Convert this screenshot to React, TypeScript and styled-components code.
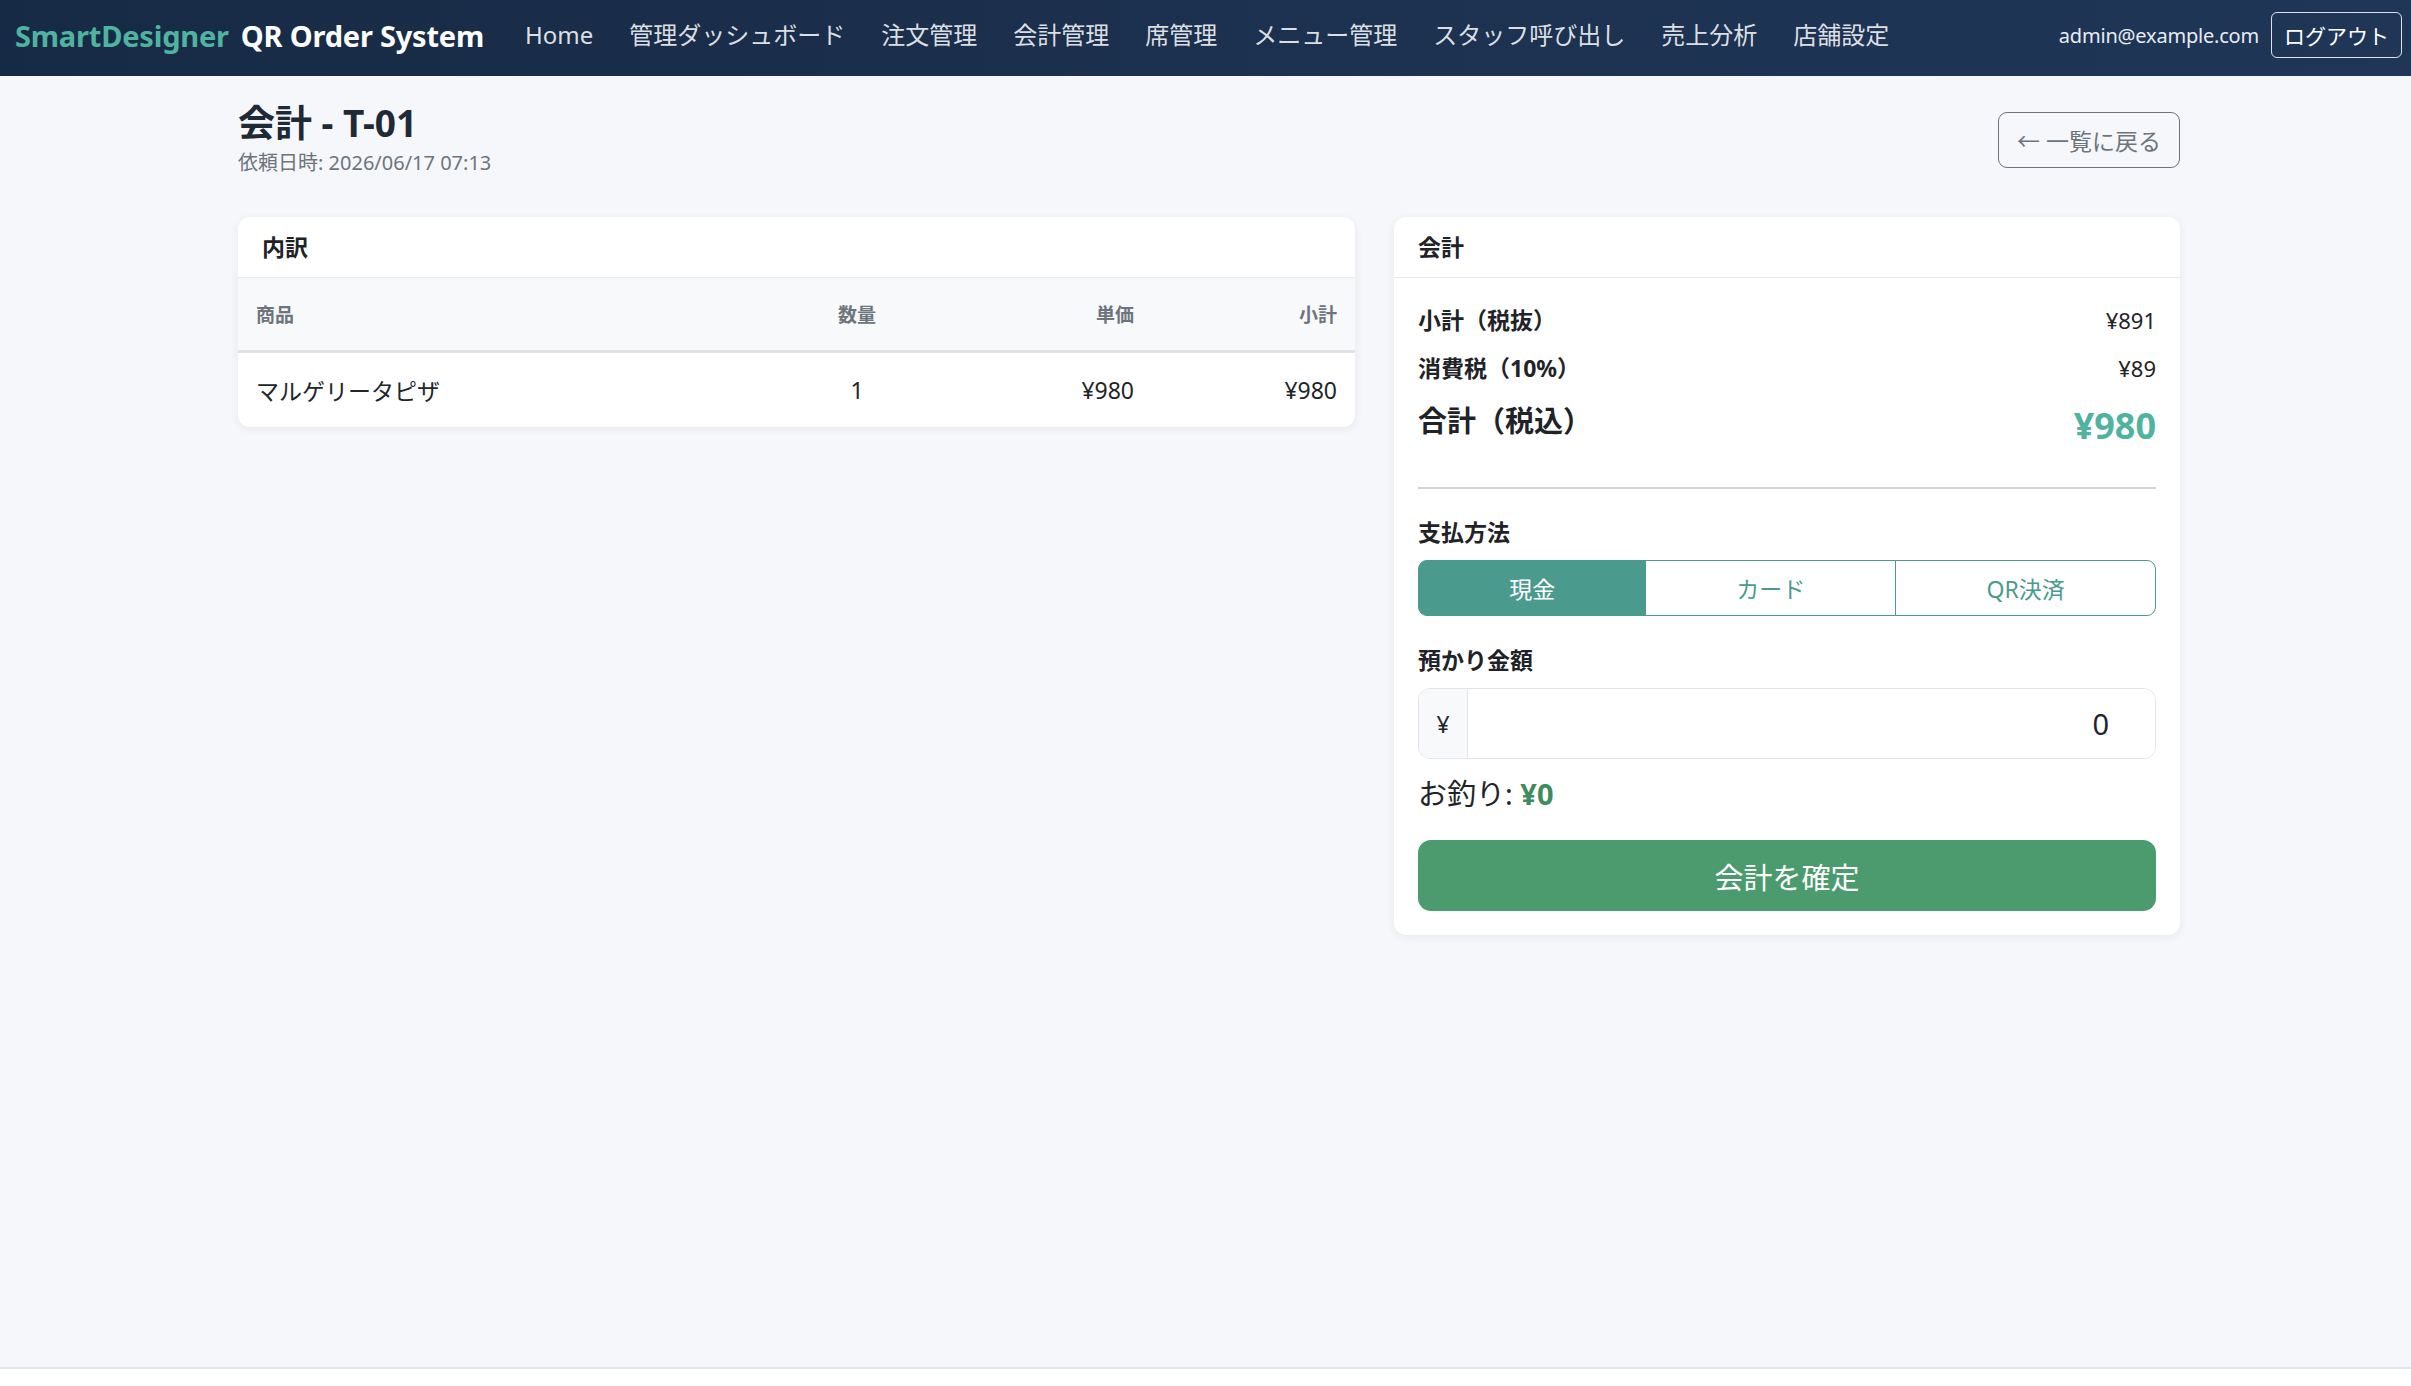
import React, { useState } from "react";
import styled, { createGlobalStyle } from "styled-components";

const GlobalStyle = createGlobalStyle`
  * { box-sizing: border-box; }
  body {
    margin: 0;
    background: #ffffff;
    font-family: "Noto Sans", "Noto Sans CJK JP", sans-serif;
    color: #212529;
  }
  input[type="number"]::-webkit-inner-spin-button,
  input[type="number"]::-webkit-outer-spin-button {
    -webkit-appearance: none;
    margin: 0;
  }
`;

/* ---------- navbar ---------- */

const Navbar = styled.nav`
  height: 76px;
  display: flex;
  align-items: center;
  padding: 0 9px 6px 15px;
  background: linear-gradient(90deg, #172a45 0%, #1d3251 60%, #1f3657 100%);
`;

const Brand = styled.div`
  font-size: 29px;
  font-weight: 700;
  color: #ffffff;
  white-space: nowrap;
  margin-right: 23px;
  letter-spacing: -0.2px;
`;

const BrandAccent = styled.span`
  color: #4fb3a0;
  margin-right: 12px;
`;

const NavLinks = styled.div`
  display: flex;
  align-items: center;
  flex: 1;
`;

const NavLink = styled.a`
  font-size: 24px;
  color: rgba(255, 255, 255, 0.86);
  padding: 0 18px;
  text-decoration: none;
  white-space: nowrap;
  line-height: 36px;
`;

const UserArea = styled.div`
  display: flex;
  align-items: center;
  gap: 12px;
`;

const UserEmail = styled.span`
  font-size: 20px;
  letter-spacing: -0.2px;
  color: #e8ecf1;
`;

const LogoutButton = styled.button`
  height: 46px;
  padding: 0 12px;
  font-family: inherit;
  font-size: 21px;
  color: #ffffff;
  background: transparent;
  border: 1.5px solid rgba(255, 255, 255, 0.85);
  border-radius: 6px;
`;

/* ---------- page ---------- */

const Main = styled.main`
  min-height: 1291px;
  background: #f6f7fb;
  padding: 25px 231px 0 238px;
`;

const PageHeader = styled.div`
  display: flex;
  justify-content: space-between;
  align-items: center;
  margin-bottom: 39px;
`;

const Title = styled.h1`
  margin: 0;
  font-size: 37px;
  line-height: 43px;
  font-weight: 700;
  color: #1f2a37;
`;

const Subtitle = styled.div`
  margin-top: 3px;
  font-size: 20px;
  line-height: 31px;
  color: #6c757d;
`;

const OutlineButton = styled.button`
  height: 56px;
  padding: 0 18px;
  font-family: inherit;
  font-size: 23px;
  color: #6c757d;
  background: transparent;
  border: 1.5px solid #6c757d;
  border-radius: 9px;
`;

const Columns = styled.div`
  display: grid;
  grid-template-columns: minmax(0, 1fr) 786px;
  gap: 39px;
  align-items: start;
`;

const Card = styled.section`
  background: #ffffff;
  border-radius: 12px;
  box-shadow: 0 2px 10px rgba(30, 41, 59, 0.07);
  overflow: hidden;
`;

const CardHeader = styled.div`
  padding: 12px 24px;
  font-size: 23px;
  line-height: 36px;
  font-weight: 700;
  color: #1f2328;
  border-bottom: 1.5px solid #e5e8ec;
`;

const CardBody = styled.div`
  padding: 24px 24px 24px;
`;

/* ---------- items table ---------- */

const Table = styled.table`
  width: 100%;
  border-collapse: collapse;
  table-layout: fixed;
`;

const Th = styled.th<{ $align?: "left" | "center" | "right"; $width?: number }>`
  height: 73px;
  padding: 0 18px;
  background: #f8f9fa;
  border-bottom: 3px solid #dee2e6;
  font-size: 19px;
  font-weight: 700;
  color: #6c757d;
  text-align: ${(p) => p.$align ?? "left"};
  width: ${(p) => (p.$width ? `${p.$width}px` : "auto")};
`;

const Td = styled.td<{ $align?: "left" | "center" | "right" }>`
  height: 76px;
  padding: 0 18px;
  font-size: 23px;
  color: #212529;
  text-align: ${(p) => p.$align ?? "left"};
`;

/* ---------- checkout panel ---------- */

const SummaryRow = styled.div`
  display: flex;
  justify-content: space-between;
  align-items: center;
  font-size: 23px;
  line-height: 36px;
  margin-bottom: 12px;
`;

const SummaryLabel = styled.span`
  font-weight: 700;
  color: #1f2328;
`;

const SummaryValue = styled.span`
  font-size: 22px;
  color: #212529;
`;

const TotalRow = styled.div`
  display: flex;
  justify-content: space-between;
  align-items: flex-start;
`;

const TotalLabel = styled.span`
  font-size: 29px;
  line-height: 45px;
  font-weight: 700;
  color: #1f2328;
`;

const TotalValue = styled.span`
  margin-top: 5px;
  font-size: 36px;
  line-height: 45px;
  font-weight: 700;
  color: #4fb3a0;
`;

const Divider = styled.hr`
  margin: 39px 0 25px;
  border: 0;
  border-top: 2px solid #cfd2d6;
`;

const FieldLabel = styled.div`
  font-size: 23px;
  line-height: 36px;
  font-weight: 700;
  color: #1f2328;
  margin-bottom: 10px;
`;

const MethodGroup = styled.div`
  display: flex;
  margin-bottom: 26px;
`;

const MethodButton = styled.button<{ $active: boolean }>`
  flex: 1 1 auto;
  height: 56px;
  padding: 0 18px;
  font-family: inherit;
  font-size: 23px;
  color: ${(p) => (p.$active ? "#ffffff" : "#4a9b8e")};
  background: ${(p) => (p.$active ? "#4a9b8e" : "#ffffff")};
  border: 1.5px solid #4a9b8e;
  border-radius: 0;
  margin-left: -1.5px;

  &:first-child {
    margin-left: 0;
    border-radius: 9px 0 0 9px;
  }
  &:last-child {
    border-radius: 0 9px 9px 0;
  }
`;

const InputGroup = styled.div`
  display: flex;
  height: 71px;
  margin: 3px 0 12px;
  border: 1.5px solid #e2e5e9;
  border-radius: 12px;
  overflow: hidden;
`;

const InputPrefix = styled.span`
  width: 49px;
  flex: none;
  display: flex;
  align-items: center;
  justify-content: center;
  font-size: 23px;
  color: #212529;
  background: #f8f9fa;
  border-right: 1.5px solid #e2e5e9;
`;

const AmountInput = styled.input`
  flex: 1;
  min-width: 0;
  border: 0;
  outline: none;
  padding: 0 46px 0 16px;
  font-family: inherit;
  font-size: 29px;
  color: #212529;
  text-align: right;
  background: #ffffff;
`;

const ChangeLine = styled.div`
  font-size: 29px;
  line-height: 45px;
  color: #212529;
  margin-bottom: 24px;
`;

const ChangeValue = styled.strong`
  color: #3d8b5e;
`;

const ConfirmButton = styled.button`
  display: block;
  width: 100%;
  height: 71px;
  font-family: inherit;
  font-size: 29px;
  color: #ffffff;
  background: #4b9b6e;
  border: 0;
  border-radius: 13px;
`;

const Footer = styled.footer`
  height: 19px;
  background: #ffffff;
  border-top: 2px solid #dfe5eb;
`;

const navItems = [
  "Home",
  "管理ダッシュボード",
  "注文管理",
  "会計管理",
  "席管理",
  "メニュー管理",
  "スタッフ呼び出し",
  "売上分析",
  "店舗設定",
];

const methods = ["現金", "カード", "QR決済"];

const items = [{ name: "マルゲリータピザ", qty: 1, price: 980 }];

const yen = (n: number) => `¥${n.toLocaleString("ja-JP")}`;

export default function App() {
  const [method, setMethod] = useState("現金");
  const [received, setReceived] = useState("0");

  const total = items.reduce((sum, i) => sum + i.qty * i.price, 0);
  const tax = Math.round(total - total / 1.1);
  const change = Math.max(0, (Number(received) || 0) - total);

  return (
    <>
      <GlobalStyle />
      <Navbar>
        <Brand>
          <BrandAccent>SmartDesigner</BrandAccent>QR Order System
        </Brand>
        <NavLinks>
          {navItems.map((item) => (
            <NavLink key={item} href="#">
              {item}
            </NavLink>
          ))}
        </NavLinks>
        <UserArea>
          <UserEmail>admin@example.com</UserEmail>
          <LogoutButton>ログアウト</LogoutButton>
        </UserArea>
      </Navbar>

      <Main>
        <PageHeader>
          <div>
            <Title>会計 - T-01</Title>
            <Subtitle>依頼日時: 2026/06/17 07:13</Subtitle>
          </div>
          <OutlineButton>← 一覧に戻る</OutlineButton>
        </PageHeader>

        <Columns>
          <Card>
            <CardHeader>内訳</CardHeader>
            <Table>
              <thead>
                <tr>
                  <Th>商品</Th>
                  <Th $align="center" $width={184}>
                    数量
                  </Th>
                  <Th $align="right" $width={203}>
                    単価
                  </Th>
                  <Th $align="right" $width={203}>
                    小計
                  </Th>
                </tr>
              </thead>
              <tbody>
                {items.map((i) => (
                  <tr key={i.name}>
                    <Td>{i.name}</Td>
                    <Td $align="center">{i.qty}</Td>
                    <Td $align="right">{yen(i.price)}</Td>
                    <Td $align="right">{yen(i.qty * i.price)}</Td>
                  </tr>
                ))}
              </tbody>
            </Table>
          </Card>

          <Card>
            <CardHeader>会計</CardHeader>
            <CardBody>
              <SummaryRow>
                <SummaryLabel>小計（税抜）</SummaryLabel>
                <SummaryValue>{yen(total - tax)}</SummaryValue>
              </SummaryRow>
              <SummaryRow>
                <SummaryLabel>消費税（10%）</SummaryLabel>
                <SummaryValue>{yen(tax)}</SummaryValue>
              </SummaryRow>
              <TotalRow>
                <TotalLabel>合計（税込）</TotalLabel>
                <TotalValue>{yen(total)}</TotalValue>
              </TotalRow>

              <Divider />

              <FieldLabel>支払方法</FieldLabel>
              <MethodGroup>
                {methods.map((m) => (
                  <MethodButton key={m} $active={m === method} onClick={() => setMethod(m)}>
                    {m}
                  </MethodButton>
                ))}
              </MethodGroup>

              <FieldLabel>預かり金額</FieldLabel>
              <InputGroup>
                <InputPrefix>¥</InputPrefix>
                <AmountInput
                  type="number"
                  value={received}
                  onChange={(e) => setReceived(e.target.value)}
                />
              </InputGroup>

              <ChangeLine>
                お釣り: <ChangeValue>{yen(change)}</ChangeValue>
              </ChangeLine>

              <ConfirmButton>会計を確定</ConfirmButton>
            </CardBody>
          </Card>
        </Columns>
      </Main>
      <Footer />
    </>
  );
}
